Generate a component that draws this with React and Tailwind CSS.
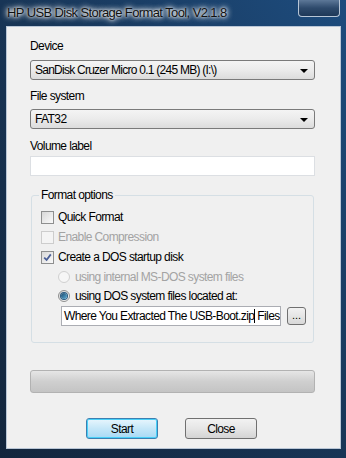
const font = { fontFamily: '"Liberation Sans", Arial, sans-serif' }

function Combo({ children }) {
  return (
    <div className="relative flex items-center h-[20px] w-[285px] rounded-[3px] border border-[#7a7a7a] bg-gradient-to-b from-[#f4f4f4] via-[#ebebeb] to-[#dcdcdc] pl-[4px] text-black">
      {children}
      <svg className="absolute right-[6px] top-[8px]" width="8" height="4" viewBox="0 0 8 4">
        <path d="M0 0H8L4 4Z" fill="#000" />
      </svg>
    </div>
  )
}

function Check({ checked, disabled, label }) {
  return (
    <div className="flex items-center h-[20px] pl-[9px]">
      <div
        className={`w-[13px] h-[13px] border ${
          disabled ? 'border-[#cdcdcd] bg-[#f4f4f4]' : 'border-[#8e8f8f] bg-gradient-to-br from-[#d8d8d8] to-[#fafafa]'
        } flex items-center justify-center`}
      >
        {checked && (
          <svg width="9" height="9" viewBox="0 0 9 9">
            <path d="M1.2 4.6L3.6 7L7.8 1.4" stroke="#4a5f97" strokeWidth="1.8" fill="none" />
          </svg>
        )}
      </div>
      <span className={`ml-[4px] ${disabled ? 'text-[#a3a3a3]' : 'text-black'}`}>{label}</span>
    </div>
  )
}

function Radio({ checked, disabled, label, h = 'h-[20px]' }) {
  return (
    <div className={`flex items-center ${h} pl-[26px]`}>
      <div
        className={`w-[12px] h-[12px] rounded-full border flex items-center justify-center ${
          disabled ? 'border-[#d0d0d0] bg-[#f6f6f6]' : 'border-[#8e8f8f] bg-gradient-to-br from-[#d8d8d8] to-[#fafafa]'
        }`}
      >
        {checked && (
          <div className="w-[6px] h-[6px] rounded-full bg-gradient-to-br from-[#1c4a6e] to-[#5fb0d8] ring-1 ring-[#2a5a80]" />
        )}
      </div>
      <span className={`ml-[5px] ${disabled ? 'text-[#a3a3a3]' : 'text-black'}`}>{label}</span>
    </div>
  )
}

export default function App() {
  return (
    <div
      style={font}
      className="w-[346px] h-[458px] flex flex-col bg-gradient-to-tr from-[#13263d] via-[#183556] to-[#1d4c7e] overflow-hidden"
    >
      {/* title bar */}
      <div className="relative h-[26px] flex items-center pl-[7px] shrink-0">
        <span className="text-[13px] tracking-[-0.6px] text-[#111] [text-shadow:0_0_6px_#fff,0_0_6px_#fff,0_0_3px_#fff]">
          HP USB Disk Storage Format Tool, V2.1.8
        </span>
        <div className="absolute right-[6px] top-0 w-[42px] h-[17px] rounded-b-[4px] border border-t-0 border-[#b8c6d6] bg-gradient-to-b from-[#5d7898] via-[#2e4a6c] to-[#1e3858]" />
      </div>

      {/* client */}
      <div className="ml-[6px] mr-[5px] mb-[9px] flex-1 border border-[#b9c6d6]">
        <div className="h-full bg-[#f0f0f0] flex flex-col pl-[23px] text-[12px] tracking-[-0.6px] text-black">
          <div className="mt-[12px] h-[14px] leading-[14px]">Device</div>
          <div className="mt-[7px]">
            <Combo>
              <span className="tracking-[-0.75px] whitespace-nowrap">SanDisk Cruzer Micro 0.1 (245 MB) (I:\)</span>
            </Combo>
          </div>
          <div className="mt-[9px] h-[14px] leading-[14px]">File system</div>
          <div className="mt-[6px]">
            <Combo>
              <span>FAT32</span>
            </Combo>
          </div>
          <div className="mt-[10px] h-[14px] leading-[14px]">Volume label</div>
          <div className="mt-[3px] h-[20px] w-[285px] bg-white border border-[#dcdfe3]" />

          <fieldset className="mt-[12px] ml-[1px] w-[283px] border border-[#d5dfe5] rounded-[3px] pb-[16px]">
            <legend className="ml-[7px] px-[2px] h-[14px] leading-[14px]">Format options</legend>
            <div className="mt-[5px]">
              <Check label="Quick Format" />
              <Check label="Enable Compression" disabled />
              <Check label="Create a DOS startup disk" checked />
              <Radio label="using internal MS-DOS system files" disabled />
              <Radio label="using DOS system files located at:" checked h="h-[18px]" />
            </div>
            <div className="mt-[1px] ml-[29px] flex items-center gap-[6px]">
              <div className="h-[20px] w-[220px] bg-white border border-[#abadb3] flex items-center pl-[2px] whitespace-nowrap overflow-hidden">
                <span>Where You Extracted The USB-Boot.zip</span>
                <span className="w-px h-[14px] bg-black shrink-0" />
                <span className="ml-[2px]">Files</span>
              </div>
              <div className="h-[18px] w-[19px] rounded-[3px] border border-[#707070] bg-gradient-to-b from-[#f2f2f2] to-[#d8d8d8] flex items-end justify-center text-[11px] tracking-normal leading-none pb-[3px]">
                ...
              </div>
            </div>
          </fieldset>

          <div className="mt-[27px] h-[23px] w-[285px] rounded-[3px] border border-[#b2b2b2] bg-gradient-to-b from-[#e6e6e6] via-[#cfcfcf] to-[#c4c4c4]" />

          <div className="mt-[25px] ml-[56px] flex gap-[27px]">
            <div className="w-[72px] h-[21px] rounded-[3px] border border-[#3c7fb1] bg-gradient-to-b from-[#e8f6fd] via-[#c5e7f8] to-[#a7d9f5] flex items-center justify-center ring-1 ring-inset ring-[#48d0f8]">
              Start
            </div>
            <div className="w-[72px] h-[21px] rounded-[3px] border border-[#707070] bg-gradient-to-b from-[#f2f2f2] via-[#e6e6e6] to-[#d4d4d4] flex items-center justify-center">
              Close
            </div>
          </div>
        </div>
      </div>
    </div>
  )
}
